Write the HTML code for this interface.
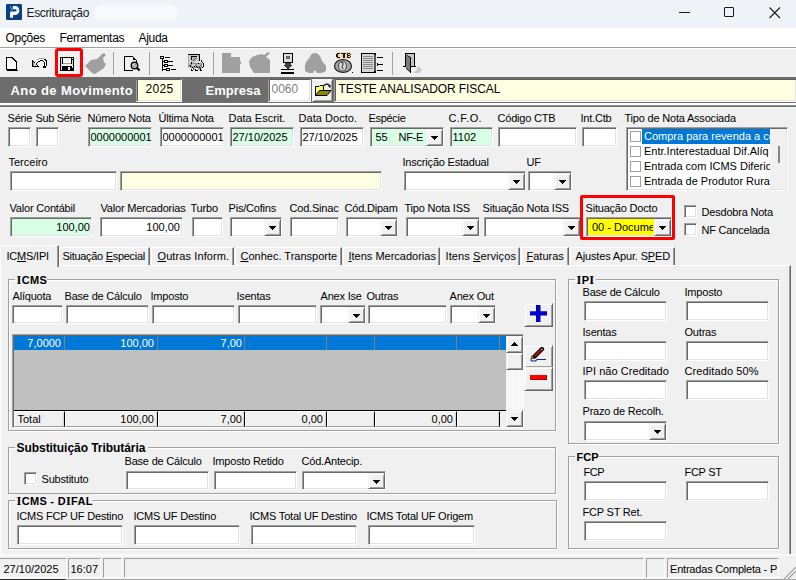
<!DOCTYPE html>
<html><head><meta charset="utf-8"><style>
html,body{margin:0;padding:0;width:796px;height:580px;overflow:hidden;background:#f0f0f0}
.a{position:absolute;box-sizing:border-box}
.t{position:absolute;white-space:nowrap;font-family:"Liberation Sans",sans-serif;color:#000}
u{text-decoration:underline;text-underline-offset:1px}
</style></head><body>
<div class="a" style="left:0px;top:0px;width:796px;height:28px;background:#eff2f7"></div>
<svg class="a" style="left:6px;top:4px" width="16" height="16" viewBox="0 0 16 16"><rect width="16" height="16" rx="1.2" fill="#0d3f80"/><path d="M6.6 2H9.2A4.1 4.5 0 0 1 9.2 11H7.1V13.7H4.1V7.5H9.4A1.2 1.1 0 0 0 9.4 5.3H7.3z" fill="#fff"/><path d="M4.2 2.6 L6.8 6.4" stroke="#2ab0f0" stroke-width="1.3"/></svg>
<div id="t0" class="t " style="left:26.5px;top:7px;font-size:12px;line-height:12px;color:#1a1a1a;letter-spacing:-0.35px;">Escritura&ccedil;&atilde;o</div>
<div class="a" style="left:94px;top:5px;width:84px;height:16px;background:#f7f9fc;border-radius:7px;filter:blur(1.5px)"></div>
<div class="a" style="left:679px;top:12px;width:11px;height:1px;background:#1a1a1a"></div>
<div class="a" style="left:724px;top:7px;width:10px;height:10px;border:1px solid #1a1a1a;border-radius:1px;box-sizing:border-box"></div>
<svg class="a" style="left:768px;top:6px" width="14" height="14" viewBox="0 0 14 14"><path d="M1.5 1.5 L12 12 M12 1.5 L1.5 12" stroke="#1a1a1a" stroke-width="1.1"/></svg>
<div class="a" style="left:0px;top:28px;width:796px;height:19px;background:#fff"></div>
<div id="t1" class="t " style="left:5.5px;top:32px;font-size:12px;line-height:12px;color:#000;letter-spacing:-0.3px;">Op&ccedil;&otilde;es</div>
<div id="t2" class="t " style="left:59.5px;top:32px;font-size:12px;line-height:12px;color:#000;letter-spacing:-0.3px;">Ferramentas</div>
<div id="t3" class="t " style="left:138.5px;top:32px;font-size:12px;line-height:12px;color:#000;letter-spacing:-0.3px;">Ajuda</div>
<div class="a" style="left:0px;top:47px;width:796px;height:1px;background:#a0a0a0"></div>
<div class="a" style="left:0px;top:48px;width:796px;height:1px;background:#fff"></div>
<div class="a" style="left:0px;top:49px;width:796px;height:28px;background:#f0f0f0"></div>
<svg class="a" style="left:0;top:0" width="440" height="80" viewBox="0 0 440 80" shape-rendering="crispEdges">
<!-- new doc -->
<path d="M6 57h7v1h1v1h1v1h1v1h1v9H6z" fill="#000"/>
<path d="M7 58h5v1h1v1h1v1h1v1h1v7H7z" fill="#f8f8f8"/>
<rect x="13" y="59" width="1" height="1" fill="#000"/>
<rect x="7" y="70" width="11" height="1" fill="#000"/>
<!-- undo -->
<rect x="37" y="59" width="7" height="1" fill="#fff"/><rect x="36" y="60" width="4" height="1" fill="#fff"/><rect x="43" y="60" width="2" height="1" fill="#fff"/><rect x="35" y="61" width="3" height="2" fill="#fff"/><rect x="44" y="61" width="2" height="1" fill="#fff"/><rect x="45" y="62" width="1" height="4" fill="#fff"/><rect x="32" y="60" width="1" height="7" fill="#000"/><rect x="33" y="61" width="1" height="1" fill="#000"/><rect x="34" y="62" width="1" height="1" fill="#000"/><rect x="33" y="66" width="6" height="1" fill="#000"/><rect x="33" y="62" width="1" height="4" fill="#a8a8a8"/><rect x="34" y="63" width="1" height="3" fill="#c8c8c8"/><rect x="35" y="64" width="1" height="2" fill="#d8d8d8"/><rect x="36" y="65" width="1" height="1" fill="#e8e8e8"/><rect x="37" y="65" width="1" height="1" fill="#000"/><rect x="36" y="63" width="1" height="2" fill="#000"/><rect x="37" y="62" width="1" height="1" fill="#000"/><rect x="38" y="61" width="2" height="1" fill="#000"/><rect x="40" y="60" width="3" height="1" fill="#000"/><rect x="43" y="61" width="1" height="1" fill="#000"/><rect x="44" y="62" width="1" height="4" fill="#000"/><rect x="43" y="66" width="3" height="2" fill="#000"/><rect x="39" y="58" width="5" height="1" fill="#a0a0a0"/><rect x="37" y="59" width="2" height="1" fill="#b0b0b0"/><rect x="36" y="60" width="1" height="1" fill="#c0c0c0"/><rect x="35" y="61" width="1" height="1" fill="#c8c8c8"/><rect x="44" y="59" width="2" height="1" fill="#000"/><rect x="45" y="60" width="2" height="1" fill="#000"/><rect x="46" y="61" width="1" height="5" fill="#000"/><rect x="45" y="66" width="1" height="1" fill="#000"/>
<!-- red hot box inner -->
<rect x="58" y="51" width="22" height="23" fill="none" stroke="#e5f3fb" stroke-width="1"/>
<!-- floppy -->
<path d="M60 57h14v14H60z" fill="#000"/>
<rect x="63" y="58" width="8" height="5" fill="#f4f4f4"/>
<rect x="63" y="63" width="8" height="1" fill="#9a9a9a"/>
<rect x="61" y="58" width="1" height="12" fill="#dcdcdc"/>
<rect x="72" y="60" width="1" height="8" fill="#dcdcdc"/>
<rect x="72" y="58" width="1" height="1" fill="#fff"/>
<rect x="68" y="67" width="2" height="3" fill="#e8e8e8"/>
<rect x="62" y="64" width="10" height="2" fill="#f0f0f0"/>
<!-- gray hand -->
<path d="M85 66 L91 60 L97 59 L100 56 L102 54 L104 53 L106 55 L103 58 L104 62 L106 64 L104 68 L98 72 L95 74 L92 73 L88 69z" fill="#a0a0a0" shape-rendering="geometricPrecision"/>
<!-- separators -->
<rect x="113" y="52" width="1" height="23" fill="#a0a0a0"/>
<rect x="149" y="52" width="1" height="23" fill="#a0a0a0"/>
<rect x="213" y="52" width="1" height="23" fill="#a0a0a0"/>
<rect x="392" y="52" width="1" height="23" fill="#a0a0a0"/>
<!-- preview -->
<rect x="124" y="56" width="9" height="1" fill="#000"/><rect x="124" y="56" width="1" height="15" fill="#000"/><rect x="124" y="70" width="9" height="1" fill="#000"/><rect x="133" y="57" width="1" height="1" fill="#000"/><rect x="134" y="58" width="1" height="1" fill="#000"/><rect x="135" y="59" width="1" height="1" fill="#000"/><rect x="136" y="60" width="1" height="2" fill="#000"/><rect x="133" y="58" width="1" height="2" fill="#000"/><rect x="134" y="59" width="2" height="1" fill="#000"/><circle cx="134.5" cy="65.5" r="3.3" fill="#b0b0b0" stroke="#000" stroke-width="1.3" shape-rendering="geometricPrecision"/><rect x="133" y="64" width="1" height="1" fill="#e8e8e8"/><rect x="134" y="65" width="1" height="1" fill="#d0d0d0"/><rect x="135" y="64" width="1" height="1" fill="#909090"/><rect x="133" y="66" width="1" height="1" fill="#909090"/><path d="M136.8 67.8 L139.5 70.5" stroke="#000" stroke-width="2.2" shape-rendering="geometricPrecision"/>
<!-- tree -->
<rect x="162" y="58" width="1" height="13" fill="#000"/><rect x="160" y="56" width="4" height="3" fill="#000"/><rect x="161" y="57" width="2" height="1" fill="#fff"/><rect x="165" y="57" width="5" height="1" fill="#000"/><rect x="164" y="60" width="4" height="3" fill="#000"/><rect x="165" y="61" width="2" height="1" fill="#fff"/><rect x="168" y="61" width="5" height="1" fill="#000"/><rect x="164" y="64" width="4" height="3" fill="#000"/><rect x="165" y="65" width="2" height="1" fill="#fff"/><rect x="168" y="65" width="5" height="1" fill="#000"/><rect x="166" y="68" width="4" height="3" fill="#000"/><rect x="167" y="69" width="2" height="1" fill="#fff"/><rect x="171" y="69" width="5" height="1" fill="#000"/><rect x="163" y="61" width="1" height="1" fill="#000"/><rect x="163" y="65" width="1" height="1" fill="#000"/><rect x="163" y="69" width="3" height="1" fill="#000"/>
<!-- machine gray -->
<rect x="189" y="55" width="10" height="8" fill="#c8c8c8"/><rect x="188" y="54" width="12" height="1" fill="#000"/><rect x="199" y="54" width="1" height="7" fill="#000"/><rect x="188" y="55" width="1" height="13" fill="#a8a8a8"/><rect x="189" y="55" width="1" height="12" fill="#d8d8d8"/><rect x="191" y="56" width="6" height="1" fill="#000"/><rect x="191" y="57" width="1" height="3" fill="#000"/><rect x="192" y="57" width="5" height="4" fill="#b8b8b8"/><rect x="195" y="58" width="1" height="1" fill="#404040"/><rect x="194" y="59" width="1" height="1" fill="#404040"/><rect x="193" y="60" width="1" height="1" fill="#404040"/><rect x="196" y="61" width="2" height="5" fill="#e8e8e8"/><rect x="190" y="63" width="12" height="5" fill="#909090"/><rect x="192" y="64" width="3" height="2" fill="#d0d0d0"/><rect x="197" y="64" width="3" height="2" fill="#c0c0c0"/><rect x="191" y="62" width="1" height="1" fill="#000"/><rect x="191" y="63" width="1" height="1" fill="#000"/><rect x="189" y="65" width="1" height="1" fill="#000"/><rect x="190" y="66" width="1" height="1" fill="#000"/><rect x="192" y="67" width="1" height="1" fill="#000"/><rect x="193" y="68" width="1" height="1" fill="#000"/><rect x="191" y="69" width="1" height="1" fill="#000"/><rect x="191" y="70" width="1" height="1" fill="#000"/><rect x="192" y="70" width="1" height="1" fill="#000"/><rect x="196" y="66" width="1" height="1" fill="#000"/><rect x="197" y="67" width="1" height="1" fill="#000"/><rect x="195" y="69" width="1" height="1" fill="#000"/><rect x="195" y="70" width="1" height="1" fill="#000"/><rect x="196" y="70" width="1" height="1" fill="#000"/><rect x="197" y="70" width="1" height="1" fill="#000"/><rect x="199" y="67" width="1" height="1" fill="#000"/><rect x="200" y="68" width="1" height="1" fill="#000"/><rect x="200" y="69" width="1" height="1" fill="#000"/><rect x="200" y="70" width="1" height="1" fill="#000"/><rect x="201" y="70" width="1" height="1" fill="#000"/><rect x="201" y="60" width="1" height="1" fill="#000"/><rect x="201" y="61" width="1" height="1" fill="#000"/><rect x="202" y="62" width="1" height="1" fill="#000"/><rect x="203" y="63" width="1" height="1" fill="#000"/><rect x="203" y="64" width="1" height="1" fill="#000"/><rect x="203" y="65" width="1" height="1" fill="#000"/><rect x="203" y="66" width="1" height="1" fill="#000"/><rect x="202" y="67" width="1" height="1" fill="#000"/><rect x="198" y="63" width="1" height="1" fill="#000"/><rect x="194" y="66" width="1" height="1" fill="#000"/><rect x="193" y="69" width="2" height="1" fill="#a0a0a0"/><rect x="198" y="68" width="2" height="2" fill="#a0a0a0"/>
<!-- gray icon 1 -->
<path d="M222 53h9v4h9v4h1v3h-1v9h-18z" fill="#a0a0a0"/>
<!-- gray icon 2 -->
<path d="M249 61 L252 57 L257 55 L262 54 L264 55 L268 52 L270 53 L266 57 L270 60 L270 73 L254 73 L250 67z" fill="#a0a0a0" shape-rendering="geometricPrecision"/>
<!-- import -->
<rect x="283" y="53" width="10" height="10" fill="#000"/>
<rect x="284" y="54" width="8" height="8" fill="#dedede"/>
<rect x="286" y="56" width="4" height="3" fill="#6a6a6a"/>
<path d="M285 63h6v2h2l-5 4-5-4h2z" fill="#404040"/>
<rect x="281" y="69" width="13" height="1" fill="#000"/>
<rect x="281" y="72" width="13" height="2" fill="#000"/>
<!-- gray blob 3 -->
<path d="M315 53 Q311 53 310 57 L306 62 Q304 66 305 71 L309 73 L313 73 L315 70 L317 73 L322 73 L326 71 L326 66 L322 61 L320 56 Q318 53 315 53z" fill="#a0a0a0" shape-rendering="geometricPrecision"/>
<!-- CTB -->
<rect x="336" y="52" width="15" height="7" fill="#e8dcc8"/><rect x="337" y="53" width="3" height="1" fill="#2a1400"/><rect x="336" y="54" width="1" height="3" fill="#2a1400"/><rect x="337" y="57" width="3" height="1" fill="#2a1400"/><rect x="337" y="54" width="1" height="3" fill="#2a1400"/><rect x="341" y="53" width="5" height="1" fill="#2a1400"/><rect x="343" y="54" width="1" height="4" fill="#2a1400"/><rect x="344" y="54" width="1" height="4" fill="#2a1400"/><rect x="347" y="53" width="1" height="5" fill="#2a1400"/><rect x="348" y="53" width="2" height="1" fill="#2a1400"/><rect x="348" y="55" width="2" height="1" fill="#2a1400"/><rect x="348" y="57" width="2" height="1" fill="#2a1400"/><rect x="350" y="54" width="1" height="1" fill="#2a1400"/><rect x="350" y="56" width="1" height="1" fill="#2a1400"/>
<ellipse cx="343" cy="66" rx="8.5" ry="6.5" fill="#a8a8a8" stroke="#222" stroke-width="1.2" shape-rendering="geometricPrecision"/>
<ellipse cx="342.5" cy="66" rx="4" ry="5" fill="#d8d8d8" stroke="#444" stroke-width="1" shape-rendering="geometricPrecision"/>
<path d="M341 62 q3 0 2 3 q-2 1 0 4" stroke="#222" stroke-width="1" fill="none" shape-rendering="geometricPrecision"/>
<rect x="352" y="72" width="1" height="1" fill="#000"/>
<!-- book -->
<rect x="361" y="53" width="15" height="20" fill="#000"/>
<rect x="362" y="54" width="12" height="18" fill="#d8d8d8"/>
<rect x="363" y="56" width="10" height="1" fill="#888"/>
<rect x="363" y="58" width="10" height="1" fill="#888"/>
<rect x="363" y="60" width="10" height="1" fill="#888"/>
<rect x="363" y="62" width="10" height="1" fill="#888"/>
<rect x="363" y="64" width="10" height="1" fill="#888"/>
<rect x="363" y="66" width="10" height="1" fill="#888"/>
<rect x="363" y="68" width="10" height="1" fill="#888"/>
<rect x="374" y="55" width="2" height="16" fill="#555"/>
<rect x="377" y="57" width="6" height="1" fill="#000"/>
<rect x="377" y="64" width="6" height="1" fill="#000"/>
<rect x="377" y="70" width="6" height="1" fill="#000"/>
<rect x="377" y="63" width="1" height="3" fill="#000"/>
<!-- door -->
<rect x="406" y="54" width="8" height="12" fill="#c4c4c4"/><rect x="405" y="53" width="10" height="1" fill="#000"/><rect x="405" y="53" width="1" height="14" fill="#000"/><rect x="414" y="53" width="1" height="14" fill="#000"/><path d="M406 54 L410 57 L410 72 L406 69z" fill="#7a7a7a" shape-rendering="geometricPrecision"/><rect x="410" y="57" width="1" height="16" fill="#000"/><rect x="407" y="55" width="1" height="1" fill="#303030"/><rect x="408" y="56" width="1" height="1" fill="#303030"/><rect x="409" y="56" width="1" height="1" fill="#303030"/><rect x="406" y="68" width="1" height="1" fill="#303030"/><rect x="407" y="69" width="1" height="1" fill="#303030"/><rect x="408" y="70" width="1" height="1" fill="#303030"/><rect x="409" y="71" width="1" height="1" fill="#303030"/><rect x="403" y="66" width="3" height="1" fill="#000"/><rect x="411" y="66" width="5" height="1" fill="#000"/><path d="M413.5 73 L416 70.5 L418 70 L416.5 67.5 L418.5 66.5 L422 69.5 L419 73z" fill="#c8c8c8" shape-rendering="geometricPrecision"/>
</svg>

<div class="a" style="left:55px;top:48px;width:28px;height:29px;border:3px solid #ff0000;border-radius:3px"></div>
<div class="a" style="left:0px;top:77px;width:796px;height:26px;background:#6d6d6d"></div>
<div id="t4" class="t " style="left:10.5px;top:84px;font-size:13px;line-height:13px;font-weight:bold;color:#fff;letter-spacing:0.4px;">Ano de Movimento</div>
<div class="a" style="left:136px;top:79px;width:46px;height:23px;background:#ffffe1;border:1px solid;border-color:#5d5d5d #fff #fff #a0a0a0;box-shadow:inset 1px 0 #5d5d5d,inset -1px -1px #e3e3e3"></div>
<div id="t5" class="t " style="left:145.5px;top:83px;font-size:12px;line-height:12px;color:#000;letter-spacing:0.3px;">2025</div>
<div id="t6" class="t " style="left:205.5px;top:84px;font-size:13px;line-height:13px;font-weight:bold;color:#fff;letter-spacing:0px;">Empresa</div>
<div class="a" style="left:268px;top:79px;width:43px;height:23px;background:#fff;border:1px solid;border-color:#5d5d5d #fff #fff #a0a0a0;box-shadow:inset 1px 0 #5d5d5d,inset -1px -1px #e3e3e3"></div>
<div id="t7" class="t " style="left:271.5px;top:83px;font-size:12px;line-height:12px;color:#808080;letter-spacing:0px;">0060</div>
<div class="a" style="left:312px;top:79px;width:21px;height:23px;background:#f0f0f0;border:1px solid;border-color:#f0f0f0 #696969 #696969 #f0f0f0;box-shadow:inset 1px 1px #fff,inset -1px -1px #a0a0a0;"></div>
<svg class="a" style="left:314px;top:82px" width="18" height="15" viewBox="0 0 18 15"><path d="M1.5 4.5H5L6 3.5H9.5V13.5H1.5z" fill="#ffff40" stroke="#000" stroke-width="1"/><path d="M2.5 5.5h2v1h-2zM3.5 7.5h2v1h-2zM2.5 9.5h2v1h-2z" fill="#fff"/><path d="M1.5 13.5L5.5 8.5H17L13 13.5z" fill="#8a8a00" stroke="#000" stroke-width="1" stroke-linejoin="round"/><path d="M10 3.5Q12.5 0.8 15.5 3.2" fill="none" stroke="#000" stroke-width="1.2"/><path d="M13.8 3.8L17 3.2L16 6z" fill="#000"/></svg>
<div class="a" style="left:334px;top:79px;width:463px;height:23px;background:#ffffe1;border:1px solid;border-color:#5d5d5d #fff #fff #a0a0a0;box-shadow:inset 1px 0 #5d5d5d,inset -1px -1px #e3e3e3"></div>
<div id="t8" class="t " style="left:338.5px;top:83px;font-size:12px;line-height:12px;color:#000;letter-spacing:-0.1px;">TESTE ANALISADOR FISCAL</div>
<div class="a" style="left:0px;top:103px;width:796px;height:2px;background:#fff"></div>
<div class="a" style="left:0px;top:105px;width:796px;height:1px;background:#8c8c8c"></div>
<div class="a" style="left:0px;top:106px;width:796px;height:1px;background:#696969"></div>
<div class="a" style="left:0px;top:107px;width:796px;height:448px;background:#f0f0f0;border-top:1px solid #fafafa"></div>
<div id="t9" class="t " style="left:7.5px;top:113px;font-size:11px;line-height:11px;color:#000;letter-spacing:-0.2px;">S&eacute;rie</div>
<div id="t10" class="t " style="left:35.5px;top:113px;font-size:11px;line-height:11px;color:#000;letter-spacing:-0.35px;">Sub S&eacute;rie</div>
<div id="t11" class="t " style="left:87.5px;top:113px;font-size:11px;line-height:11px;color:#000;letter-spacing:-0.2px;">N&uacute;mero Nota</div>
<div id="t12" class="t " style="left:158.5px;top:113px;font-size:11px;line-height:11px;color:#000;letter-spacing:-0.2px;">&Uacute;ltima Nota</div>
<div id="t13" class="t " style="left:228.5px;top:113px;font-size:11px;line-height:11px;color:#000;letter-spacing:0px;">Data Escrit.</div>
<div id="t14" class="t " style="left:298.5px;top:113px;font-size:11px;line-height:11px;color:#000;letter-spacing:0.05px;">Data Docto.</div>
<div id="t15" class="t " style="left:368.5px;top:113px;font-size:11px;line-height:11px;color:#000;letter-spacing:-0.3px;">Esp&eacute;cie</div>
<div id="t16" class="t " style="left:448.5px;top:113px;font-size:11px;line-height:11px;color:#000;letter-spacing:0.4px;">C.F.O.</div>
<div id="t17" class="t " style="left:497.5px;top:113px;font-size:11px;line-height:11px;color:#000;letter-spacing:-0.2px;">C&oacute;digo CTB</div>
<div id="t18" class="t " style="left:580.5px;top:113px;font-size:11px;line-height:11px;color:#000;letter-spacing:-0.2px;">Int.Ctb</div>
<div id="t19" class="t " style="left:624.5px;top:113px;font-size:11px;line-height:11px;color:#000;letter-spacing:-0.2px;">Tipo de Nota Associada</div>
<div class="a" style="left:8px;top:127px;width:23px;height:20px;background:#fff;border:1px solid;border-color:#a0a0a0 #fff #fff #a0a0a0;box-shadow:inset 1px 1px #696969,inset -1px -1px #e3e3e3;"></div>
<div class="a" style="left:36px;top:127px;width:23px;height:20px;background:#fff;border:1px solid;border-color:#a0a0a0 #fff #fff #a0a0a0;box-shadow:inset 1px 1px #696969,inset -1px -1px #e3e3e3;"></div>
<div class="a" style="left:88px;top:127px;width:64px;height:20px;background:#d8ffe6;border:1px solid;border-color:#a0a0a0 #fff #fff #a0a0a0;box-shadow:inset 1px 1px #696969,inset -1px -1px #e3e3e3;"></div>
<div id="t20" class="t " style="left:90.5px;top:132px;font-size:11px;line-height:11px;color:#000;letter-spacing:0px;">0000000001</div>
<div class="a" style="left:160px;top:127px;width:64px;height:20px;background:#fff;border:1px solid;border-color:#a0a0a0 #fff #fff #a0a0a0;box-shadow:inset 1px 1px #696969,inset -1px -1px #e3e3e3;"></div>
<div id="t21" class="t " style="left:162.5px;top:132px;font-size:11px;line-height:11px;color:#000;letter-spacing:0px;">0000000001</div>
<div class="a" style="left:230px;top:127px;width:64px;height:20px;background:#d8ffe6;border:1px solid;border-color:#a0a0a0 #fff #fff #a0a0a0;box-shadow:inset 1px 1px #696969,inset -1px -1px #e3e3e3;"></div>
<div id="t22" class="t " style="left:232.5px;top:132px;font-size:11px;line-height:11px;color:#000;letter-spacing:0px;">27/10/2025</div>
<div class="a" style="left:300px;top:127px;width:64px;height:20px;background:#fff;border:1px solid;border-color:#a0a0a0 #fff #fff #a0a0a0;box-shadow:inset 1px 1px #696969,inset -1px -1px #e3e3e3;"></div>
<div id="t23" class="t " style="left:302.5px;top:132px;font-size:11px;line-height:11px;color:#000;letter-spacing:0px;">27/10/2025</div>
<div class="a" style="left:370px;top:127px;width:74px;height:20px;background:#d8ffe6;border:1px solid;border-color:#a0a0a0 #fff #fff #a0a0a0;box-shadow:inset 1px 1px #696969,inset -1px -1px #e3e3e3;"></div>
<div class="a" style="left:426px;top:129px;width:17px;height:17px;background:#f0f0f0;border:1px solid;border-color:#f0f0f0 #696969 #696969 #f0f0f0;box-shadow:inset 1px 1px #fff,inset -1px -1px #a0a0a0;"></div>
<svg class="a" style="left:431px;top:136px" width="7" height="4" shape-rendering="crispEdges"><path d="M0 0h7v1h-1v1h-1v1h-1v1h-1v-1h-1v-1h-1v-1h-1z" fill="#000"/></svg>
<div id="t24" class="t " style="left:375.5px;top:132px;font-size:11px;line-height:11px;color:#000;letter-spacing:0px;">55</div>
<div id="t25" class="t " style="left:398.5px;top:132px;font-size:11px;line-height:11px;color:#000;letter-spacing:-0.3px;">NF-E</div>
<div class="a" style="left:450px;top:127px;width:43px;height:20px;background:#d8ffe6;border:1px solid;border-color:#a0a0a0 #fff #fff #a0a0a0;box-shadow:inset 1px 1px #696969,inset -1px -1px #e3e3e3;"></div>
<div id="t26" class="t " style="left:452.5px;top:132px;font-size:11px;line-height:11px;color:#000;letter-spacing:0px;">1102</div>
<div class="a" style="left:498px;top:127px;width:79px;height:20px;background:#fff;border:1px solid;border-color:#a0a0a0 #fff #fff #a0a0a0;box-shadow:inset 1px 1px #696969,inset -1px -1px #e3e3e3;"></div>
<div class="a" style="left:582px;top:127px;width:35px;height:20px;background:#fff;border:1px solid;border-color:#a0a0a0 #fff #fff #a0a0a0;box-shadow:inset 1px 1px #696969,inset -1px -1px #e3e3e3;"></div>
<div class="a" style="left:626px;top:127px;width:162px;height:64px;background:#fff;border:1px solid;border-color:#a0a0a0 #fff #fff #a0a0a0;box-shadow:inset 1px 1px #696969,inset -1px -1px #e3e3e3;"></div>
<div class="a" style="left:770px;top:129px;width:16px;height:60px;background:#f0f0f0"></div>
<div class="a" style="left:778px;top:146px;width:2px;height:17px;background:#858585"></div>
<div class="a" style="left:642px;top:129px;width:128px;height:15px;background:#0078d7"></div>
<div class="a" style="left:630px;top:131px;width:11px;height:11px;background:#fff;border:1px solid #a0a0a0;box-sizing:border-box"></div>
<div class="t" style="left:644px;top:130px;width:126px;overflow:hidden;font-size:11px;line-height:13px;color:#fff;letter-spacing:0px">Compra para revenda a co</div>
<div class="a" style="left:630px;top:146px;width:11px;height:11px;background:#fff;border:1px solid #a0a0a0;box-sizing:border-box"></div>
<div class="t" style="left:644px;top:145px;width:126px;overflow:hidden;font-size:11px;line-height:13px;color:#000;letter-spacing:0px">Entr.Interestadual Dif.Al&iacute;q</div>
<div class="a" style="left:630px;top:161px;width:11px;height:11px;background:#fff;border:1px solid #a0a0a0;box-sizing:border-box"></div>
<div class="t" style="left:644px;top:160px;width:126px;overflow:hidden;font-size:11px;line-height:13px;color:#000;letter-spacing:0px">Entrada com ICMS Diferido</div>
<div class="a" style="left:630px;top:176px;width:11px;height:11px;background:#fff;border:1px solid #a0a0a0;box-sizing:border-box"></div>
<div class="t" style="left:644px;top:175px;width:126px;overflow:hidden;font-size:11px;line-height:13px;color:#000;letter-spacing:0px">Entrada de Produtor Rural</div>
<div id="t27" class="t " style="left:8.5px;top:157px;font-size:11px;line-height:11px;color:#000;letter-spacing:0px;">Terceiro</div>
<div class="a" style="left:10px;top:171px;width:107px;height:20px;background:#fff;border:1px solid;border-color:#a0a0a0 #fff #fff #a0a0a0;box-shadow:inset 1px 1px #696969,inset -1px -1px #e3e3e3;"></div>
<div class="a" style="left:120px;top:171px;width:262px;height:20px;background:#ffffe1;border:1px solid;border-color:#a0a0a0 #fff #fff #a0a0a0;box-shadow:inset 1px 1px #696969,inset -1px -1px #e3e3e3;"></div>
<div id="t28" class="t " style="left:402.5px;top:157px;font-size:11px;line-height:11px;color:#000;letter-spacing:-0.2px;">Inscri&ccedil;&atilde;o Estadual</div>
<div class="a" style="left:404px;top:171px;width:122px;height:20px;background:#fff;border:1px solid;border-color:#a0a0a0 #fff #fff #a0a0a0;box-shadow:inset 1px 1px #696969,inset -1px -1px #e3e3e3;"></div>
<div class="a" style="left:508px;top:173px;width:17px;height:17px;background:#f0f0f0;border:1px solid;border-color:#f0f0f0 #696969 #696969 #f0f0f0;box-shadow:inset 1px 1px #fff,inset -1px -1px #a0a0a0;"></div>
<svg class="a" style="left:513px;top:180px" width="7" height="4" shape-rendering="crispEdges"><path d="M0 0h7v1h-1v1h-1v1h-1v1h-1v-1h-1v-1h-1v-1h-1z" fill="#000"/></svg>
<div id="t29" class="t " style="left:526.5px;top:157px;font-size:11px;line-height:11px;color:#000;letter-spacing:-0.2px;">UF</div>
<div class="a" style="left:528px;top:171px;width:44px;height:20px;background:#fff;border:1px solid;border-color:#a0a0a0 #fff #fff #a0a0a0;box-shadow:inset 1px 1px #696969,inset -1px -1px #e3e3e3;"></div>
<div class="a" style="left:554px;top:173px;width:17px;height:17px;background:#f0f0f0;border:1px solid;border-color:#f0f0f0 #696969 #696969 #f0f0f0;box-shadow:inset 1px 1px #fff,inset -1px -1px #a0a0a0;"></div>
<svg class="a" style="left:559px;top:180px" width="7" height="4" shape-rendering="crispEdges"><path d="M0 0h7v1h-1v1h-1v1h-1v1h-1v-1h-1v-1h-1v-1h-1z" fill="#000"/></svg>
<div id="t30" class="t " style="left:9.5px;top:203px;font-size:11px;line-height:11px;color:#000;letter-spacing:-0.2px;">Valor Cont&aacute;bil</div>
<div id="t31" class="t " style="left:100.5px;top:203px;font-size:11px;line-height:11px;color:#000;letter-spacing:-0.2px;">Valor Mercadorias</div>
<div id="t32" class="t " style="left:190.5px;top:203px;font-size:11px;line-height:11px;color:#000;letter-spacing:-0.2px;">Turbo</div>
<div id="t33" class="t " style="left:228.5px;top:203px;font-size:11px;line-height:11px;color:#000;letter-spacing:-0.2px;">Pis/Cofins</div>
<div id="t34" class="t " style="left:289.5px;top:203px;font-size:11px;line-height:11px;color:#000;letter-spacing:-0.2px;">Cod.Sinac</div>
<div id="t35" class="t " style="left:344.5px;top:203px;font-size:11px;line-height:11px;color:#000;letter-spacing:-0.2px;">C&oacute;d.Dipam</div>
<div id="t36" class="t " style="left:404.5px;top:203px;font-size:11px;line-height:11px;color:#000;letter-spacing:-0.2px;">Tipo Nota ISS</div>
<div id="t37" class="t " style="left:482.5px;top:203px;font-size:11px;line-height:11px;color:#000;letter-spacing:-0.2px;">Situa&ccedil;&atilde;o Nota ISS</div>
<div class="a" style="left:10px;top:217px;width:82px;height:20px;background:#d8ffe6;border:1px solid;border-color:#a0a0a0 #fff #fff #a0a0a0;box-shadow:inset 1px 1px #696969,inset -1px -1px #e3e3e3;"></div>
<div class="t" style="left:10px;width:80px;top:222px;font-size:11px;line-height:11px;text-align:right">100,00</div>
<div class="a" style="left:100px;top:217px;width:83px;height:20px;background:#fff;border:1px solid;border-color:#a0a0a0 #fff #fff #a0a0a0;box-shadow:inset 1px 1px #696969,inset -1px -1px #e3e3e3;"></div>
<div class="t" style="left:100px;width:80px;top:222px;font-size:11px;line-height:11px;text-align:right">100,00</div>
<div class="a" style="left:192px;top:217px;width:31px;height:20px;background:#fff;border:1px solid;border-color:#a0a0a0 #fff #fff #a0a0a0;box-shadow:inset 1px 1px #696969,inset -1px -1px #e3e3e3;"></div>
<div class="a" style="left:230px;top:217px;width:52px;height:20px;background:#fff;border:1px solid;border-color:#a0a0a0 #fff #fff #a0a0a0;box-shadow:inset 1px 1px #696969,inset -1px -1px #e3e3e3;"></div>
<div class="a" style="left:264px;top:219px;width:17px;height:17px;background:#f0f0f0;border:1px solid;border-color:#f0f0f0 #696969 #696969 #f0f0f0;box-shadow:inset 1px 1px #fff,inset -1px -1px #a0a0a0;"></div>
<svg class="a" style="left:269px;top:226px" width="7" height="4" shape-rendering="crispEdges"><path d="M0 0h7v1h-1v1h-1v1h-1v1h-1v-1h-1v-1h-1v-1h-1z" fill="#000"/></svg>
<div class="a" style="left:290px;top:217px;width:49px;height:20px;background:#fff;border:1px solid;border-color:#a0a0a0 #fff #fff #a0a0a0;box-shadow:inset 1px 1px #696969,inset -1px -1px #e3e3e3;"></div>
<div class="a" style="left:346px;top:217px;width:52px;height:20px;background:#fff;border:1px solid;border-color:#a0a0a0 #fff #fff #a0a0a0;box-shadow:inset 1px 1px #696969,inset -1px -1px #e3e3e3;"></div>
<div class="a" style="left:380px;top:219px;width:17px;height:17px;background:#f0f0f0;border:1px solid;border-color:#f0f0f0 #696969 #696969 #f0f0f0;box-shadow:inset 1px 1px #fff,inset -1px -1px #a0a0a0;"></div>
<svg class="a" style="left:385px;top:226px" width="7" height="4" shape-rendering="crispEdges"><path d="M0 0h7v1h-1v1h-1v1h-1v1h-1v-1h-1v-1h-1v-1h-1z" fill="#000"/></svg>
<div class="a" style="left:406px;top:217px;width:74px;height:20px;background:#fff;border:1px solid;border-color:#a0a0a0 #fff #fff #a0a0a0;box-shadow:inset 1px 1px #696969,inset -1px -1px #e3e3e3;"></div>
<div class="a" style="left:462px;top:219px;width:17px;height:17px;background:#f0f0f0;border:1px solid;border-color:#f0f0f0 #696969 #696969 #f0f0f0;box-shadow:inset 1px 1px #fff,inset -1px -1px #a0a0a0;"></div>
<svg class="a" style="left:467px;top:226px" width="7" height="4" shape-rendering="crispEdges"><path d="M0 0h7v1h-1v1h-1v1h-1v1h-1v-1h-1v-1h-1v-1h-1z" fill="#000"/></svg>
<div class="a" style="left:484px;top:217px;width:97px;height:20px;background:#fff;border:1px solid;border-color:#a0a0a0 #fff #fff #a0a0a0;box-shadow:inset 1px 1px #696969,inset -1px -1px #e3e3e3;"></div>
<div class="a" style="left:563px;top:219px;width:17px;height:17px;background:#f0f0f0;border:1px solid;border-color:#f0f0f0 #696969 #696969 #f0f0f0;box-shadow:inset 1px 1px #fff,inset -1px -1px #a0a0a0;"></div>
<svg class="a" style="left:568px;top:226px" width="7" height="4" shape-rendering="crispEdges"><path d="M0 0h7v1h-1v1h-1v1h-1v1h-1v-1h-1v-1h-1v-1h-1z" fill="#000"/></svg>
<div class="a" style="left:580px;top:195px;width:95px;height:45px;border:3px solid #f00;border-radius:2px;box-sizing:border-box"></div>
<div id="t38" class="t " style="left:585.5px;top:203px;font-size:11px;line-height:11px;color:#000;letter-spacing:-0.2px;">Situa&ccedil;&atilde;o Docto</div>
<div class="a" style="left:586px;top:217px;width:86px;height:20px;background:#fff;border:1px solid;border-color:#a0a0a0 #fff #fff #a0a0a0;box-shadow:inset 1px 1px #696969,inset -1px -1px #e3e3e3;"></div>
<div class="a" style="left:654px;top:219px;width:17px;height:17px;background:#f0f0f0;border:1px solid;border-color:#f0f0f0 #696969 #696969 #f0f0f0;box-shadow:inset 1px 1px #fff,inset -1px -1px #a0a0a0;"></div>
<svg class="a" style="left:659px;top:226px" width="7" height="4" shape-rendering="crispEdges"><path d="M0 0h7v1h-1v1h-1v1h-1v1h-1v-1h-1v-1h-1v-1h-1z" fill="#000"/></svg>
<div class="a" style="left:588px;top:219px;width:66px;height:16px;background:#ffff00"></div>
<div class="t" style="left:592px;top:222px;width:61px;overflow:hidden;font-size:11px;line-height:11px;letter-spacing:0">00 - Documento</div>
<div class="a" style="left:684px;top:205px;width:13px;height:13px;background:#fff;border:1px solid;border-color:#a0a0a0 #fff #fff #a0a0a0;box-shadow:inset 1px 1px #696969,inset -1px -1px #e3e3e3;"></div>
<div id="t39" class="t " style="left:701.5px;top:207px;font-size:11px;line-height:11px;color:#000;letter-spacing:-0.2px;">Desdobra Nota</div>
<div class="a" style="left:684px;top:223px;width:13px;height:13px;background:#fff;border:1px solid;border-color:#a0a0a0 #fff #fff #a0a0a0;box-shadow:inset 1px 1px #696969,inset -1px -1px #e3e3e3;"></div>
<div id="t40" class="t " style="left:701.5px;top:225px;font-size:11px;line-height:11px;color:#000;letter-spacing:-0.2px;">NF Cancelada</div>
<div class="a" style="left:59px;top:247px;width:91px;height:18px;border-top:1px solid #fff;border-left:1px solid #fff;border-right:1px solid #696969;box-shadow:inset -1px 0 #a0a0a0;box-sizing:border-box"></div>
<div id="t41" class="t " style="left:62.5px;top:251px;font-size:11px;line-height:11px;color:#000;letter-spacing:-0.3px;">Situa&ccedil;&atilde;o <u>E</u>special</div>
<div class="a" style="left:151px;top:247px;width:83px;height:18px;border-top:1px solid #fff;border-left:1px solid #fff;border-right:1px solid #696969;box-shadow:inset -1px 0 #a0a0a0;box-sizing:border-box"></div>
<div id="t42" class="t " style="left:157.5px;top:251px;font-size:11px;line-height:11px;color:#000;letter-spacing:0.1px;"><u>O</u>utras Inform.</div>
<div class="a" style="left:235px;top:247px;width:107px;height:18px;border-top:1px solid #fff;border-left:1px solid #fff;border-right:1px solid #696969;box-shadow:inset -1px 0 #a0a0a0;box-sizing:border-box"></div>
<div id="t43" class="t " style="left:240.5px;top:251px;font-size:11px;line-height:11px;color:#000;letter-spacing:0px;"><u>C</u>onhec. Transporte</div>
<div class="a" style="left:343px;top:247px;width:97px;height:18px;border-top:1px solid #fff;border-left:1px solid #fff;border-right:1px solid #696969;box-shadow:inset -1px 0 #a0a0a0;box-sizing:border-box"></div>
<div id="t44" class="t " style="left:348.5px;top:251px;font-size:11px;line-height:11px;color:#000;letter-spacing:0px;"><u>I</u>tens Mercadorias</div>
<div class="a" style="left:441px;top:247px;width:79px;height:18px;border-top:1px solid #fff;border-left:1px solid #fff;border-right:1px solid #696969;box-shadow:inset -1px 0 #a0a0a0;box-sizing:border-box"></div>
<div id="t45" class="t " style="left:445.5px;top:251px;font-size:11px;line-height:11px;color:#000;letter-spacing:0.1px;">Itens <u>S</u>ervi&ccedil;os</div>
<div class="a" style="left:521px;top:247px;width:48px;height:18px;border-top:1px solid #fff;border-left:1px solid #fff;border-right:1px solid #696969;box-shadow:inset -1px 0 #a0a0a0;box-sizing:border-box"></div>
<div id="t46" class="t " style="left:526.5px;top:251px;font-size:11px;line-height:11px;color:#000;letter-spacing:0px;"><u>F</u>aturas</div>
<div class="a" style="left:570px;top:247px;width:105px;height:18px;border-top:1px solid #fff;border-left:1px solid #fff;border-right:1px solid #696969;box-shadow:inset -1px 0 #a0a0a0;box-sizing:border-box"></div>
<div id="t47" class="t " style="left:575.5px;top:251px;font-size:11px;line-height:11px;color:#000;letter-spacing:-0.15px;">Ajustes Apur. S<u>P</u>ED</div>
<div class="a" style="left:0px;top:265px;width:791px;height:289px;border-top:1px solid #fff;border-left:1px solid #fff;border-right:1px solid #696969;box-shadow:inset -1px 0 #a0a0a0;box-sizing:border-box"></div>
<div class="a" style="left:0px;top:245px;width:59px;height:22px;background:#f0f0f0;border-top:1px solid #fff;border-left:1px solid #fff;border-right:1px solid #696969;box-shadow:inset -1px 0 #a0a0a0;box-sizing:border-box;border-radius:1px 1px 0 0"></div>
<div id="t48" class="t " style="left:6.5px;top:251px;font-size:11px;line-height:11px;color:#000;letter-spacing:-0.2px;">IC<u>M</u>S/IPI</div>
<div class="a" style="left:8px;top:279px;width:548px;height:152px;border:1px solid #a0a0a0;box-shadow:1px 1px #fff, inset 1px 1px #fff;box-sizing:border-box"></div>
<div class="a" style="left:15px;top:273px;width:32px;height:13px;background:#f0f0f0"></div>
<div id="t49" class="t " style="left:16.5px;top:275px;font-size:11px;line-height:11px;font-weight:bold;color:#000;letter-spacing:0.3px;"><span style='font-family:"Liberation Serif";font-size:12.5px'>I</span>CMS</div>
<div id="t50" class="t " style="left:12.5px;top:291px;font-size:11px;line-height:11px;color:#000;letter-spacing:-0.2px;">Al&iacute;quota</div>
<div id="t51" class="t " style="left:64.5px;top:291px;font-size:11px;line-height:11px;color:#000;letter-spacing:-0.2px;">Base de C&aacute;lculo</div>
<div id="t52" class="t " style="left:150.5px;top:291px;font-size:11px;line-height:11px;color:#000;letter-spacing:-0.2px;">Imposto</div>
<div id="t53" class="t " style="left:236.5px;top:291px;font-size:11px;line-height:11px;color:#000;letter-spacing:-0.2px;">Isentas</div>
<div id="t54" class="t " style="left:320.5px;top:291px;font-size:11px;line-height:11px;color:#000;letter-spacing:-0.2px;">Anex Ise</div>
<div id="t55" class="t " style="left:366.5px;top:291px;font-size:11px;line-height:11px;color:#000;letter-spacing:-0.2px;">Outras</div>
<div id="t56" class="t " style="left:449.5px;top:291px;font-size:11px;line-height:11px;color:#000;letter-spacing:-0.2px;">Anex Out</div>
<div class="a" style="left:12px;top:305px;width:51px;height:19px;background:#fff;border:1px solid;border-color:#a0a0a0 #fff #fff #a0a0a0;box-shadow:inset 1px 1px #696969,inset -1px -1px #e3e3e3;"></div>
<div class="a" style="left:66px;top:305px;width:83px;height:19px;background:#fff;border:1px solid;border-color:#a0a0a0 #fff #fff #a0a0a0;box-shadow:inset 1px 1px #696969,inset -1px -1px #e3e3e3;"></div>
<div class="a" style="left:152px;top:305px;width:83px;height:19px;background:#fff;border:1px solid;border-color:#a0a0a0 #fff #fff #a0a0a0;box-shadow:inset 1px 1px #696969,inset -1px -1px #e3e3e3;"></div>
<div class="a" style="left:238px;top:305px;width:79px;height:19px;background:#fff;border:1px solid;border-color:#a0a0a0 #fff #fff #a0a0a0;box-shadow:inset 1px 1px #696969,inset -1px -1px #e3e3e3;"></div>
<div class="a" style="left:320px;top:305px;width:46px;height:19px;background:#fff;border:1px solid;border-color:#a0a0a0 #fff #fff #a0a0a0;box-shadow:inset 1px 1px #696969,inset -1px -1px #e3e3e3;"></div>
<div class="a" style="left:348px;top:307px;width:17px;height:16px;background:#f0f0f0;border:1px solid;border-color:#f0f0f0 #696969 #696969 #f0f0f0;box-shadow:inset 1px 1px #fff,inset -1px -1px #a0a0a0;"></div>
<svg class="a" style="left:353px;top:314px" width="7" height="4" shape-rendering="crispEdges"><path d="M0 0h7v1h-1v1h-1v1h-1v1h-1v-1h-1v-1h-1v-1h-1z" fill="#000"/></svg>
<div class="a" style="left:368px;top:305px;width:79px;height:19px;background:#fff;border:1px solid;border-color:#a0a0a0 #fff #fff #a0a0a0;box-shadow:inset 1px 1px #696969,inset -1px -1px #e3e3e3;"></div>
<div class="a" style="left:450px;top:305px;width:46px;height:19px;background:#fff;border:1px solid;border-color:#a0a0a0 #fff #fff #a0a0a0;box-shadow:inset 1px 1px #696969,inset -1px -1px #e3e3e3;"></div>
<div class="a" style="left:478px;top:307px;width:17px;height:16px;background:#f0f0f0;border:1px solid;border-color:#f0f0f0 #696969 #696969 #f0f0f0;box-shadow:inset 1px 1px #fff,inset -1px -1px #a0a0a0;"></div>
<svg class="a" style="left:483px;top:314px" width="7" height="4" shape-rendering="crispEdges"><path d="M0 0h7v1h-1v1h-1v1h-1v1h-1v-1h-1v-1h-1v-1h-1z" fill="#000"/></svg>
<div class="a" style="left:524px;top:303px;width:29px;height:24px;background:#f0f0f0;border:1px solid;border-color:#f0f0f0 #696969 #696969 #f0f0f0;box-shadow:inset 1px 1px #fff,inset -1px -1px #a0a0a0;"></div>
<svg class="a" style="left:530px;top:305px" width="17" height="17" viewBox="0 0 17 17"><path d="M6 0h4.5v6.2H17v4.3h-6.5V17H6v-6.5H0V6.2h6z" fill="#0000cc"/></svg>
<div class="a" style="left:12px;top:334px;width:512px;height:94px;background:#c0c0c0;border:1px solid;border-color:#a0a0a0 #fff #fff #a0a0a0;box-shadow:inset 1px 1px #696969,inset -1px -1px #e3e3e3;"></div>
<div class="a" style="left:14px;top:336px;width:492px;height:14px;background:#0078d7"></div>
<div class="a" style="left:64px;top:336px;width:1px;height:14px;background:#808080"></div>
<div class="a" style="left:157px;top:336px;width:1px;height:14px;background:#808080"></div>
<div class="a" style="left:244px;top:336px;width:1px;height:14px;background:#808080"></div>
<div class="a" style="left:326px;top:336px;width:1px;height:14px;background:#808080"></div>
<div class="a" style="left:374px;top:336px;width:1px;height:14px;background:#808080"></div>
<div class="a" style="left:456px;top:336px;width:1px;height:14px;background:#808080"></div>
<div class="a" style="left:499px;top:336px;width:1px;height:14px;background:#808080"></div>
<div class="t" style="left:1px;width:60px;top:338px;font-size:11px;line-height:11px;color:#fff;text-align:right">7,0000</div>
<div class="t" style="left:94px;width:60px;top:338px;font-size:11px;line-height:11px;color:#fff;text-align:right">100,00</div>
<div class="t" style="left:182px;width:60px;top:338px;font-size:11px;line-height:11px;color:#fff;text-align:right">7,00</div>
<div class="a" style="left:14px;top:410px;width:492px;height:1px;background:#000"></div>
<div class="a" style="left:14px;top:411px;width:492px;height:16px;background:#f0f0f0"></div>
<div class="a" style="left:14px;top:411px;width:51px;height:16px;border-left:1px solid #fff;border-top:1px solid #fff;border-right:1px solid #000;border-bottom:1px solid #a0a0a0;box-shadow:inset -1px 0 #d8d8d8;box-sizing:border-box;"></div>
<div class="a" style="left:65px;top:411px;width:93px;height:16px;border-left:1px solid #fff;border-top:1px solid #fff;border-right:1px solid #000;border-bottom:1px solid #a0a0a0;box-shadow:inset -1px 0 #d8d8d8;box-sizing:border-box;"></div>
<div class="a" style="left:158px;top:411px;width:87px;height:16px;border-left:1px solid #fff;border-top:1px solid #fff;border-right:1px solid #000;border-bottom:1px solid #a0a0a0;box-shadow:inset -1px 0 #d8d8d8;box-sizing:border-box;"></div>
<div class="a" style="left:245px;top:411px;width:82px;height:16px;border-left:1px solid #fff;border-top:1px solid #fff;border-right:1px solid #000;border-bottom:1px solid #a0a0a0;box-shadow:inset -1px 0 #d8d8d8;box-sizing:border-box;"></div>
<div class="a" style="left:327px;top:411px;width:48px;height:16px;border-left:1px solid #fff;border-top:1px solid #fff;border-right:1px solid #000;border-bottom:1px solid #a0a0a0;box-shadow:inset -1px 0 #d8d8d8;box-sizing:border-box;"></div>
<div class="a" style="left:375px;top:411px;width:82px;height:16px;border-left:1px solid #fff;border-top:1px solid #fff;border-right:1px solid #000;border-bottom:1px solid #a0a0a0;box-shadow:inset -1px 0 #d8d8d8;box-sizing:border-box;"></div>
<div class="a" style="left:457px;top:411px;width:43px;height:16px;border-left:1px solid #fff;border-top:1px solid #fff;border-right:1px solid #000;border-bottom:1px solid #a0a0a0;box-shadow:inset -1px 0 #d8d8d8;box-sizing:border-box;"></div>
<div id="t57" class="t " style="left:17.5px;top:414px;font-size:11px;line-height:11px;color:#000;letter-spacing:0px;">Total</div>
<div class="t" style="left:94px;width:60px;top:414px;font-size:11px;line-height:11px;text-align:right">100,00</div>
<div class="t" style="left:182px;width:60px;top:414px;font-size:11px;line-height:11px;text-align:right">7,00</div>
<div class="t" style="left:263px;width:60px;top:414px;font-size:11px;line-height:11px;text-align:right">0,00</div>
<div class="t" style="left:393px;width:60px;top:414px;font-size:11px;line-height:11px;text-align:right">0,00</div>
<div class="a" style="left:506px;top:336px;width:17px;height:91px;background:repeating-conic-gradient(#f0f0f0 0 25%,#fff 0 50%) 0 0/2px 2px"></div>
<div class="a" style="left:506px;top:336px;width:17px;height:17px;background:#f0f0f0;border:1px solid;border-color:#f0f0f0 #696969 #696969 #f0f0f0;box-shadow:inset 1px 1px #fff,inset -1px -1px #a0a0a0;"></div>
<svg class="a" style="left:511px;top:342px" width="7" height="4" shape-rendering="crispEdges"><path d="M0 4h7v-1h-1v-1h-1v-1h-1v-1h-1v1h-1v1h-1v1h-1z" fill="#000"/></svg>
<div class="a" style="left:506px;top:353px;width:17px;height:17px;background:#f0f0f0;border:1px solid;border-color:#f0f0f0 #696969 #696969 #f0f0f0;box-shadow:inset 1px 1px #fff,inset -1px -1px #a0a0a0;"></div>
<div class="a" style="left:506px;top:410px;width:17px;height:17px;background:#f0f0f0;border:1px solid;border-color:#f0f0f0 #696969 #696969 #f0f0f0;box-shadow:inset 1px 1px #fff,inset -1px -1px #a0a0a0;"></div>
<svg class="a" style="left:511px;top:417px" width="7" height="4" shape-rendering="crispEdges"><path d="M0 0h7v1h-1v1h-1v1h-1v1h-1v-1h-1v-1h-1v-1h-1z" fill="#000"/></svg>
<div class="a" style="left:524px;top:345px;width:29px;height:23px;background:#f0f0f0;border:1px solid;border-color:#f0f0f0 #696969 #696969 #f0f0f0;box-shadow:inset 1px 1px #fff,inset -1px -1px #a0a0a0;"></div>
<svg class="a" style="left:529px;top:347px" width="20" height="18" viewBox="0 0 20 18"><path d="M5.5 9.5L13 2" stroke="#000" stroke-width="4.2" stroke-linecap="round"/><path d="M5.5 9.5L13 2" stroke="#b01010" stroke-width="2"/><path d="M12.3 2.7L13.4 1.6" stroke="#f0c0c0" stroke-width="1.2"/><path d="M2 12L3 8.8L5.2 11z" fill="#e0b020" stroke="#000" stroke-width="0.6"/><path d="M1.5 12.5L3 14H6.5L8 12.5H17" fill="none" stroke="#0030a0" stroke-width="1.1"/></svg>
<div class="a" style="left:524px;top:367px;width:29px;height:24px;background:#f0f0f0;border:1px solid;border-color:#f0f0f0 #696969 #696969 #f0f0f0;box-shadow:inset 1px 1px #fff,inset -1px -1px #a0a0a0;"></div>
<div class="a" style="left:530px;top:375px;width:17px;height:5px;background:#ff0000;border-right:1px solid #b00000;border-bottom:1px solid #b00000"></div>
<div class="a" style="left:568px;top:279px;width:211px;height:165px;border:1px solid #a0a0a0;box-shadow:1px 1px #fff, inset 1px 1px #fff;box-sizing:border-box"></div>
<div class="a" style="left:575px;top:273px;width:21px;height:13px;background:#f0f0f0"></div>
<div id="t58" class="t " style="left:576.5px;top:275px;font-size:11px;line-height:11px;font-weight:bold;color:#000;letter-spacing:0.3px;"><span style='font-family:"Liberation Serif";font-size:12.5px'>I</span>P<span style='font-family:"Liberation Serif";font-size:12.5px'>I</span></div>
<div id="t59" class="t " style="left:582.5px;top:287px;font-size:11px;line-height:11px;color:#000;letter-spacing:-0.2px;">Base de C&aacute;lculo</div>
<div id="t60" class="t " style="left:684.5px;top:287px;font-size:11px;line-height:11px;color:#000;letter-spacing:-0.2px;">Imposto</div>
<div class="a" style="left:584px;top:301px;width:83px;height:20px;background:#fff;border:1px solid;border-color:#a0a0a0 #fff #fff #a0a0a0;box-shadow:inset 1px 1px #696969,inset -1px -1px #e3e3e3;"></div>
<div class="a" style="left:686px;top:301px;width:83px;height:20px;background:#fff;border:1px solid;border-color:#a0a0a0 #fff #fff #a0a0a0;box-shadow:inset 1px 1px #696969,inset -1px -1px #e3e3e3;"></div>
<div id="t61" class="t " style="left:582.5px;top:327px;font-size:11px;line-height:11px;color:#000;letter-spacing:-0.2px;">Isentas</div>
<div id="t62" class="t " style="left:684.5px;top:327px;font-size:11px;line-height:11px;color:#000;letter-spacing:-0.2px;">Outras</div>
<div class="a" style="left:584px;top:341px;width:83px;height:20px;background:#fff;border:1px solid;border-color:#a0a0a0 #fff #fff #a0a0a0;box-shadow:inset 1px 1px #696969,inset -1px -1px #e3e3e3;"></div>
<div class="a" style="left:686px;top:341px;width:83px;height:20px;background:#fff;border:1px solid;border-color:#a0a0a0 #fff #fff #a0a0a0;box-shadow:inset 1px 1px #696969,inset -1px -1px #e3e3e3;"></div>
<div id="t63" class="t " style="left:582.5px;top:366px;font-size:11px;line-height:11px;color:#000;letter-spacing:0.05px;">IPI n&atilde;o Creditado</div>
<div id="t64" class="t " style="left:684.5px;top:366px;font-size:11px;line-height:11px;color:#000;letter-spacing:0.1px;">Creditado 50%</div>
<div class="a" style="left:584px;top:380px;width:83px;height:20px;background:#fff;border:1px solid;border-color:#a0a0a0 #fff #fff #a0a0a0;box-shadow:inset 1px 1px #696969,inset -1px -1px #e3e3e3;"></div>
<div class="a" style="left:686px;top:380px;width:83px;height:20px;background:#fff;border:1px solid;border-color:#a0a0a0 #fff #fff #a0a0a0;box-shadow:inset 1px 1px #696969,inset -1px -1px #e3e3e3;"></div>
<div id="t65" class="t " style="left:582.5px;top:406px;font-size:11px;line-height:11px;color:#000;letter-spacing:-0.2px;">Prazo de Recolh.</div>
<div class="a" style="left:584px;top:421px;width:83px;height:20px;background:#fff;border:1px solid;border-color:#a0a0a0 #fff #fff #a0a0a0;box-shadow:inset 1px 1px #696969,inset -1px -1px #e3e3e3;"></div>
<div class="a" style="left:649px;top:423px;width:17px;height:17px;background:#f0f0f0;border:1px solid;border-color:#f0f0f0 #696969 #696969 #f0f0f0;box-shadow:inset 1px 1px #fff,inset -1px -1px #a0a0a0;"></div>
<svg class="a" style="left:654px;top:430px" width="7" height="4" shape-rendering="crispEdges"><path d="M0 0h7v1h-1v1h-1v1h-1v1h-1v-1h-1v-1h-1v-1h-1z" fill="#000"/></svg>
<div class="a" style="left:8px;top:447px;width:548px;height:47px;border:1px solid #a0a0a0;box-shadow:1px 1px #fff, inset 1px 1px #fff;box-sizing:border-box"></div>
<div class="a" style="left:15px;top:441px;width:133px;height:13px;background:#f0f0f0"></div>
<div id="t66" class="t " style="left:16.5px;top:442px;font-size:12px;line-height:12px;font-weight:bold;color:#000;letter-spacing:-0.05px;">Substitui&ccedil;&atilde;o Tribut&aacute;ria</div>
<div class="a" style="left:24px;top:472px;width:13px;height:13px;background:#fff;border:1px solid;border-color:#a0a0a0 #fff #fff #a0a0a0;box-shadow:inset 1px 1px #696969,inset -1px -1px #e3e3e3;"></div>
<div id="t67" class="t " style="left:41.5px;top:474px;font-size:11px;line-height:11px;color:#000;letter-spacing:-0.2px;">Substituto</div>
<div id="t68" class="t " style="left:124.5px;top:456px;font-size:11px;line-height:11px;color:#000;letter-spacing:-0.2px;">Base de C&aacute;lculo</div>
<div id="t69" class="t " style="left:212.5px;top:456px;font-size:11px;line-height:11px;color:#000;letter-spacing:-0.2px;">Imposto Retido</div>
<div id="t70" class="t " style="left:301.5px;top:456px;font-size:11px;line-height:11px;color:#000;letter-spacing:-0.2px;">C&oacute;d.Antecip.</div>
<div class="a" style="left:126px;top:471px;width:83px;height:19px;background:#fff;border:1px solid;border-color:#a0a0a0 #fff #fff #a0a0a0;box-shadow:inset 1px 1px #696969,inset -1px -1px #e3e3e3;"></div>
<div class="a" style="left:214px;top:471px;width:83px;height:19px;background:#fff;border:1px solid;border-color:#a0a0a0 #fff #fff #a0a0a0;box-shadow:inset 1px 1px #696969,inset -1px -1px #e3e3e3;"></div>
<div class="a" style="left:302px;top:471px;width:84px;height:19px;background:#fff;border:1px solid;border-color:#a0a0a0 #fff #fff #a0a0a0;box-shadow:inset 1px 1px #696969,inset -1px -1px #e3e3e3;"></div>
<div class="a" style="left:368px;top:473px;width:17px;height:16px;background:#f0f0f0;border:1px solid;border-color:#f0f0f0 #696969 #696969 #f0f0f0;box-shadow:inset 1px 1px #fff,inset -1px -1px #a0a0a0;"></div>
<svg class="a" style="left:373px;top:480px" width="7" height="4" shape-rendering="crispEdges"><path d="M0 0h7v1h-1v1h-1v1h-1v1h-1v-1h-1v-1h-1v-1h-1z" fill="#000"/></svg>
<div class="a" style="left:8px;top:500px;width:549px;height:49px;border:1px solid #a0a0a0;box-shadow:1px 1px #fff, inset 1px 1px #fff;box-sizing:border-box"></div>
<div class="a" style="left:15px;top:494px;width:77px;height:13px;background:#f0f0f0"></div>
<div id="t71" class="t " style="left:16.5px;top:496px;font-size:11px;line-height:11px;font-weight:bold;color:#000;letter-spacing:0.3px;"><span style='font-family:"Liberation Serif";font-size:12.5px'>I</span>CMS - D<span style='font-family:"Liberation Serif";font-size:12.5px'>I</span>FAL</div>
<div id="t72" class="t " style="left:16.5px;top:511px;font-size:11px;line-height:11px;color:#000;letter-spacing:-0.2px;">ICMS FCP UF Destino</div>
<div id="t73" class="t " style="left:133.5px;top:511px;font-size:11px;line-height:11px;color:#000;letter-spacing:-0.2px;">ICMS UF Destino</div>
<div id="t74" class="t " style="left:249.5px;top:511px;font-size:11px;line-height:11px;color:#000;letter-spacing:-0.2px;">ICMS Total UF Destino</div>
<div id="t75" class="t " style="left:366.5px;top:511px;font-size:11px;line-height:11px;color:#000;letter-spacing:-0.2px;">ICMS Total UF Origem</div>
<div class="a" style="left:17px;top:525px;width:106px;height:20px;background:#fff;border:1px solid;border-color:#a0a0a0 #fff #fff #a0a0a0;box-shadow:inset 1px 1px #696969,inset -1px -1px #e3e3e3;"></div>
<div class="a" style="left:134px;top:525px;width:106px;height:20px;background:#fff;border:1px solid;border-color:#a0a0a0 #fff #fff #a0a0a0;box-shadow:inset 1px 1px #696969,inset -1px -1px #e3e3e3;"></div>
<div class="a" style="left:251px;top:525px;width:106px;height:20px;background:#fff;border:1px solid;border-color:#a0a0a0 #fff #fff #a0a0a0;box-shadow:inset 1px 1px #696969,inset -1px -1px #e3e3e3;"></div>
<div class="a" style="left:368px;top:525px;width:107px;height:20px;background:#fff;border:1px solid;border-color:#a0a0a0 #fff #fff #a0a0a0;box-shadow:inset 1px 1px #696969,inset -1px -1px #e3e3e3;"></div>
<div class="a" style="left:568px;top:456px;width:211px;height:93px;border:1px solid #a0a0a0;box-shadow:1px 1px #fff, inset 1px 1px #fff;box-sizing:border-box"></div>
<div class="a" style="left:575px;top:450px;width:24px;height:13px;background:#f0f0f0"></div>
<div id="t76" class="t " style="left:576.5px;top:452px;font-size:11px;line-height:11px;font-weight:bold;color:#000;letter-spacing:0px;">FCP</div>
<div id="t77" class="t " style="left:583.5px;top:467px;font-size:11px;line-height:11px;color:#000;letter-spacing:-0.4px;">FCP</div>
<div id="t78" class="t " style="left:684.5px;top:467px;font-size:11px;line-height:11px;color:#000;letter-spacing:-0.3px;">FCP ST</div>
<div class="a" style="left:584px;top:481px;width:83px;height:20px;background:#fff;border:1px solid;border-color:#a0a0a0 #fff #fff #a0a0a0;box-shadow:inset 1px 1px #696969,inset -1px -1px #e3e3e3;"></div>
<div class="a" style="left:686px;top:481px;width:83px;height:20px;background:#fff;border:1px solid;border-color:#a0a0a0 #fff #fff #a0a0a0;box-shadow:inset 1px 1px #696969,inset -1px -1px #e3e3e3;"></div>
<div id="t79" class="t " style="left:582.5px;top:507px;font-size:11px;line-height:11px;color:#000;letter-spacing:-0.2px;">FCP ST Ret.</div>
<div class="a" style="left:584px;top:521px;width:83px;height:20px;background:#fff;border:1px solid;border-color:#a0a0a0 #fff #fff #a0a0a0;box-shadow:inset 1px 1px #696969,inset -1px -1px #e3e3e3;"></div>
<div class="a" style="left:0px;top:554px;width:796px;height:26px;background:#f0f0f0"></div>
<div class="a" style="left:0px;top:554px;width:796px;height:2px;background:#fafafa"></div>
<div class="a" style="left:-1px;top:558px;width:68px;height:20px;border-top:1px solid #a0a0a0;border-left:1px solid #a0a0a0;border-right:1px solid #fff;border-bottom:1px solid #fff;box-sizing:border-box"></div>
<div class="a" style="left:68px;top:558px;width:33px;height:20px;border-top:1px solid #a0a0a0;border-left:1px solid #a0a0a0;border-right:1px solid #fff;border-bottom:1px solid #fff;box-sizing:border-box"></div>
<div class="a" style="left:103px;top:558px;width:19px;height:20px;border-top:1px solid #a0a0a0;border-left:1px solid #a0a0a0;border-right:1px solid #fff;border-bottom:1px solid #fff;box-sizing:border-box"></div>
<div class="a" style="left:124px;top:558px;width:520px;height:20px;border-top:1px solid #a0a0a0;border-left:1px solid #a0a0a0;border-right:1px solid #fff;border-bottom:1px solid #fff;box-sizing:border-box"></div>
<div class="a" style="left:646px;top:558px;width:19px;height:20px;border-top:1px solid #a0a0a0;border-left:1px solid #a0a0a0;border-right:1px solid #fff;border-bottom:1px solid #fff;box-sizing:border-box"></div>
<div class="a" style="left:667px;top:558px;width:112px;height:20px;border-top:1px solid #a0a0a0;border-left:1px solid #a0a0a0;border-right:1px solid #fff;border-bottom:1px solid #fff;box-sizing:border-box"></div>
<div id="t80" class="t " style="left:3.5px;top:564px;font-size:11px;line-height:11px;color:#000;letter-spacing:0px;">27/10/2025</div>
<div id="t81" class="t " style="left:70.5px;top:564px;font-size:11px;line-height:11px;color:#000;letter-spacing:0px;">16:07</div>
<div class="t" style="left:670px;top:563px;width:107px;overflow:hidden;font-size:11px;line-height:13px;letter-spacing:-0.2px">Entradas Completa - Prod</div>
<svg class="a" style="left:784px;top:567px" width="12" height="12"><path d="M12 0L0 12M12 4L4 12" stroke="#a0a0a0" stroke-width="1.2"/></svg>
<div class="a" style="left:0px;top:579px;width:796px;height:1px;background:linear-gradient(90deg,#303030 0,#303030 65px,#a8a8a8 66px,#a8a8a8 100%)"></div>
</body></html>
